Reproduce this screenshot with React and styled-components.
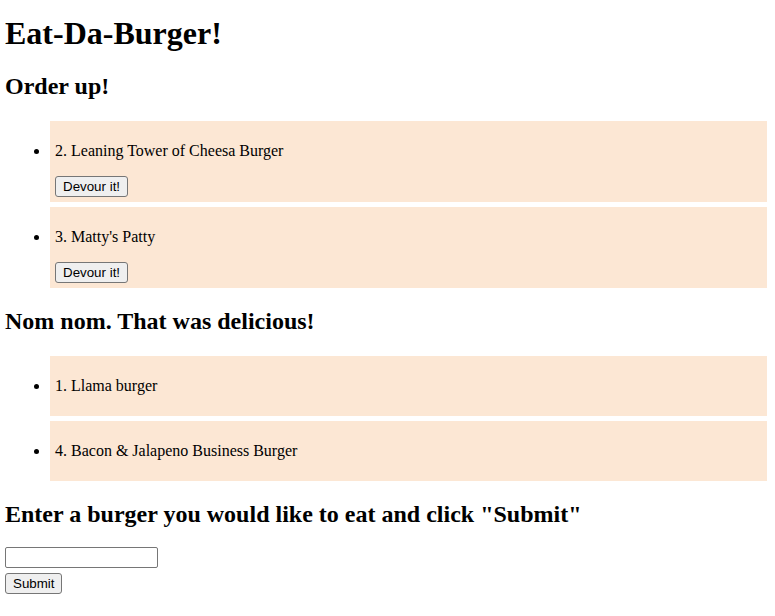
import styled, { createGlobalStyle } from "styled-components";

const burgers = [
  { id: 1, name: "Llama burger", devoured: true },
  { id: 2, name: "Leaning Tower of Cheesa Burger", devoured: false },
  { id: 3, name: "Matty's Patty", devoured: false },
  { id: 4, name: "Bacon & Jalapeno Business Burger", devoured: true },
];

export default function App() {
  const waiting = burgers.filter((b) => !b.devoured);
  const eaten = burgers.filter((b) => b.devoured);

  return (
    <Page>
      <GlobalStyle />
      <Title>Eat-Da-Burger!</Title>

      <Heading>Order up!</Heading>
      <List>
        {waiting.map((b) => (
          <Item key={b.id}>
            <Name>
              {b.id}. {b.name}
            </Name>
            <Button type="button">Devour it!</Button>
          </Item>
        ))}
      </List>

      <Heading>Nom nom. That was delicious!</Heading>
      <List>
        {eaten.map((b) => (
          <Item key={b.id}>
            <Name>
              {b.id}. {b.name}
            </Name>
          </Item>
        ))}
      </List>

      <Heading>Enter a burger you would like to eat and click "Submit"</Heading>
      <Form onSubmit={(e) => e.preventDefault()}>
        <TextInput type="text" name="burger_name" />
        <Button type="submit">Submit</Button>
      </Form>
    </Page>
  );
}

const GlobalStyle = createGlobalStyle`
  body {
    margin: 0;
    background: #fff;
    color: #000;
    font-family: "Liberation Serif", "Times New Roman", serif;
  }
`;

const Page = styled.div`
  padding: 0 8px 0 5px;
`;

const Title = styled.h1`
  font-size: 32px;
  font-weight: bold;
  margin: 15px 0 21.44px;
`;

const Heading = styled.h2`
  font-size: 24px;
  font-weight: bold;
  margin: 19.92px 0;
`;

const List = styled.ul`
  margin: 21px 0 16px;
  padding-left: 40px;
  list-style: disc;
`;

const Item = styled.li`
  margin: 5px 0 5px 5px;
  padding: 5px;
  background: #fce7d4;
`;

const Name = styled.p`
  margin: 16px 0;
  font-size: 16px;
  line-height: 18px;
`;

const Button = styled.button`
  display: block;
  box-sizing: border-box;
  height: 21px;
  padding: 0 7px;
  font-family: "Liberation Sans", Arial, sans-serif;
  font-size: 13.33px;
  color: #000;
  background: #efefef;
  border: 1px solid #767676;
  border-radius: 3px;
`;

const Form = styled.form`
  display: flex;
  flex-direction: column;
  align-items: flex-start;
  gap: 5px;
  margin-top: -1px;
`;

const TextInput = styled.input`
  box-sizing: border-box;
  width: 153px;
  height: 21px;
  padding: 1px 3px;
  font-family: "Liberation Sans", Arial, sans-serif;
  font-size: 13.33px;
  border: 1px solid #767676;
  border-radius: 2px;
  background: #fff;
`;
